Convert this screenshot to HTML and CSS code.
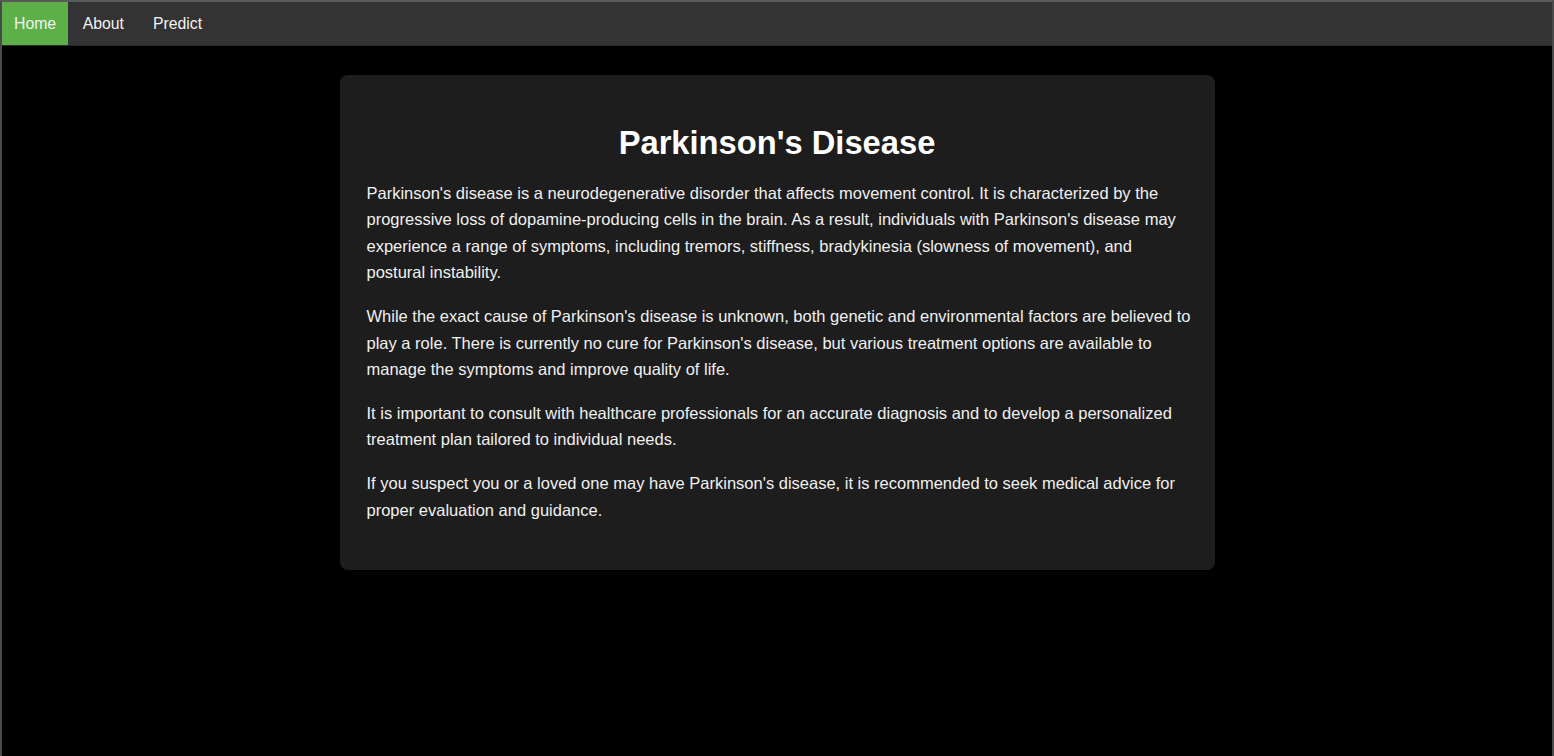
FILE: index.html
```html
<!DOCTYPE html>
<html lang="en">
<head>
<meta charset="utf-8">
<title>Parkinson's Disease</title>
<link rel="stylesheet" href="styles.css">
</head>
<body>
<div class="frame">
  <nav class="navbar">
    <a class="nav-link active" href="#">Home</a>
    <a class="nav-link" href="#">About</a>
    <a class="nav-link" href="#">Predict</a>
  </nav>
  <main class="main">
    <section class="card">
      <h1 class="title">Parkinson's Disease</h1>
      <p class="text">Parkinson's disease is a neurodegenerative disorder that affects movement control. It is characterized by the progressive loss of dopamine-producing cells in the brain. As a result, individuals with Parkinson's disease may experience a range of symptoms, including tremors, stiffness, bradykinesia (slowness of movement), and postural instability.</p>
      <p class="text">While the exact cause of Parkinson's disease is unknown, both genetic and environmental factors are believed to play a role. There is currently no cure for Parkinson's disease, but various treatment options are available to manage the symptoms and improve quality of life.</p>
      <p class="text">It is important to consult with healthcare professionals for an accurate diagnosis and to develop a personalized treatment plan tailored to individual needs.</p>
      <p class="text">If you suspect you or a loved one may have Parkinson's disease, it is recommended to seek medical advice for proper evaluation and guidance.</p>
    </section>
  </main>
</div>
</body>
</html>
```
FILE: styles.css
```css
html, body {
  margin: 0;
  padding: 0;
  background: #000;
  height: 100%;
}
body {
  font-family: "Liberation Sans", Arial, sans-serif;
  color: #fff;
}
.frame {
  box-sizing: border-box;
  min-height: 100%;
  border-top: 2px solid #5a5a5a;
  border-left: 2px solid #4a4a4a;
  border-right: 2px solid #4a4a4a;
  background: #000;
}
.navbar {
  display: flex;
  background: #333;
  height: 43px;
  border-bottom: 1px solid #2a2a2a;
}
.nav-link {
  display: flex;
  align-items: center;
  padding: 0 14.5px;
  color: #f2f2f2;
  text-decoration: none;
  font-size: 15.8px;
}
.nav-link.active {
  background: #5cb047;
  padding: 0 12px;
}
.main {
  display: flex;
  justify-content: center;
  padding-top: 29px;
}
.card {
  box-sizing: border-box;
  width: 875px;
  background: #1d1d1d;
  border-radius: 8px;
  padding: 49px 22px 29px 27px;
}
.title {
  margin: 0 5px 18px 0;
  text-align: center;
  font-size: 32.7px;
  font-weight: bold;
  line-height: 38px;
}
.text {
  margin: 0 0 17.6px;
  font-size: 16.5px;
  line-height: 26.4px;
  color: #f0f0f0;
}
```
